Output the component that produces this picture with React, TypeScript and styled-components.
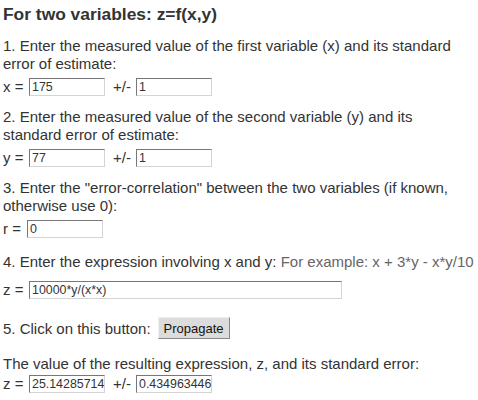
import React from "react";
import styled, { createGlobalStyle } from "styled-components";

const Global = createGlobalStyle`
  html, body { margin: 0; padding: 0; background: #fff; }
  body { font-family: Arial, "Liberation Sans", Helvetica, sans-serif; color: #333; }
`;

const Page = styled.div`
  padding: 4px 0 0 3px;
  width: 475px;
`;

const Heading = styled.h1`
  margin: 0;
  font-size: 17.4px;
  font-weight: bold;
  line-height: 20px;
  color: #333;
`;

const Section = styled.div<{ $top: number }>`
  margin-top: ${(p) => p.$top}px;
`;

const Para = styled.div`
  font-size: 15px;
  line-height: 18px;
`;

const Hint = styled.span`
  color: #666;
`;

const Row = styled.div<{ $top?: number }>`
  display: flex;
  align-items: center;
  margin-top: ${(p) => p.$top ?? 4}px;
  font-size: 15px;
  height: 19px;
`;

const Label = styled.span<{ $w: number }>`
  width: ${(p) => p.$w}px;
  flex: none;
`;

const Sep = styled.span`
  width: 31px;
  padding-left: 8px;
  box-sizing: border-box;
  flex: none;
`;

const Field = styled.input<{ $w: number }>`
  box-sizing: border-box;
  width: ${(p) => p.$w}px;
  height: 18px;
  margin: 0;
  padding: 0 0 0 2px;
  font-family: Arial, "Liberation Sans", sans-serif;
  font-size: 12.4px;
  color: #333;
  border-style: solid;
  border-width: 1px;
  border-color: #777 #d4d4d4 #d4d4d4 #777;
  background: #fff;
  outline: none;
`;

const Button = styled.button`
  box-sizing: border-box;
  width: 72px;
  height: 22px;
  margin: 0 0 0 7px;
  padding: 0;
  font-family: Arial, "Liberation Sans", sans-serif;
  font-size: 13px;
  color: #111;
  background: #dcdcdc;
  border-style: solid;
  border-width: 1px;
  border-color: #eee #888 #888 #eee;
`;

const ButtonRow = styled.div`
  display: flex;
  align-items: center;
  font-size: 15px;
  height: 22px;
`;

export default function App() {
  return (
    <Page>
      <Global />
      <Heading>For two variables: z=f(x,y)</Heading>

      <Section $top={13}>
        <Para>
          1. Enter the measured value of the first variable (x) and its standard
          <br />
          error of estimate:
        </Para>
        <Row>
          <Label $w={26}>x =</Label>
          <Field $w={76} defaultValue="175" />
          <Sep>+/-</Sep>
          <Field $w={76} defaultValue="1" />
        </Row>
      </Section>

      <Section $top={12}>
        <Para>
          2. Enter the measured value of the second variable (y) and its
          <br />
          standard error of estimate:
        </Para>
        <Row>
          <Label $w={26}>y =</Label>
          <Field $w={76} defaultValue="77" />
          <Sep>+/-</Sep>
          <Field $w={76} defaultValue="1" />
        </Row>
      </Section>

      <Section $top={12}>
        <Para>
          3. Enter the "error-correlation" between the two variables (if known,
          <br />
          otherwise use 0):
        </Para>
        <Row>
          <Label $w={24}>r =</Label>
          <Field $w={76} defaultValue="0" />
        </Row>
      </Section>

      <Section $top={15}>
        <Para>
          4. Enter the expression involving x and y: <Hint>For example: x + 3*y - x*y/10</Hint>
        </Para>
        <Row $top={9}>
          <Label $w={26}>z =</Label>
          <Field $w={313} defaultValue="10000*y/(x*x)" />
        </Row>
      </Section>

      <Section $top={18}>
        <ButtonRow>
          5. Click on this button:
          <Button type="button">Propagate</Button>
        </ButtonRow>
      </Section>

      <Section $top={16}>
        <Para>The value of the resulting expression, z, and its standard error:</Para>
        <Row $top={1}>
          <Label $w={26}>z =</Label>
          <Field $w={76} defaultValue="25.14285714" />
          <Sep>+/-</Sep>
          <Field $w={76} defaultValue="0.434963446" />
        </Row>
      </Section>
    </Page>
  );
}
